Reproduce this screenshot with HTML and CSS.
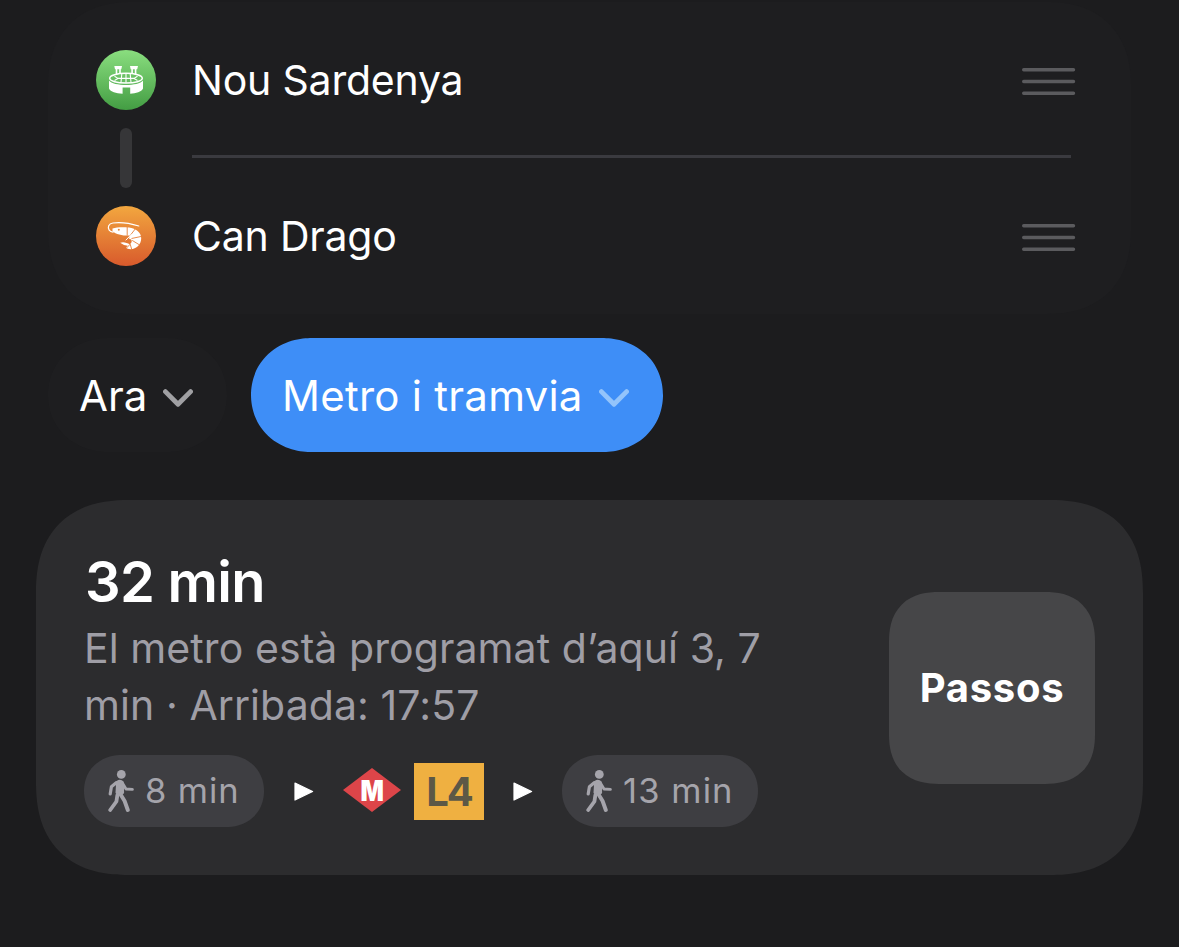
FILE: index.html
```html
<!DOCTYPE html>
<html lang="ca">
<head>
    <meta charset="UTF-8">
    <meta name="viewport" content="width=device-width, initial-scale=1.0">
    <title>Ruta: Nou Sardenya - Can Drago</title>
    <link rel="stylesheet" href="styles.css">
</head>
<body>

    <!-- Shared icons -->
    <svg class="sprite" width="0" height="0">
        <symbol id="walk" viewBox="0 0 26 42">
            <circle cx="13.3" cy="4.4" r="4.4" fill="currentColor"/>
            <path d="M9.5 11.8 Q12.5 10.3 14.6 12.5 L14.8 22.5 Q12 25.5 8.8 22.5 Z" fill="currentColor" stroke="currentColor" stroke-width="2.6" stroke-linejoin="round"/>
            <g fill="none" stroke="currentColor" stroke-linecap="round" stroke-linejoin="round">
                <path d="M8.5 12.6 L3.4 16.8 L2.2 24" stroke-width="3.2"/>
                <path d="M15 14 L18 19 L24.4 19.4" stroke-width="2.9"/>
                <path d="M9.4 25 L8.4 31.5 L2.2 40" stroke-width="3.8"/>
                <path d="M12 23.5 L16.6 31 L19.8 40" stroke-width="3.9"/>
            </g>
        </symbol>
        <symbol id="chevron" viewBox="0 0 30 18">
            <path d="M2.4 2.6 L15 15.2 L27.6 2.6" fill="none" stroke="currentColor" stroke-width="4.8" stroke-linecap="round" stroke-linejoin="round"/>
        </symbol>
        <symbol id="handle" viewBox="0 0 54 28">
            <path d="M1.7 1.7 H51.5 M1.7 13.5 H51.5 M1.7 25.3 H51.5" fill="none" stroke="currentColor" stroke-width="3.4" stroke-linecap="round"/>
        </symbol>
        <symbol id="arrow" viewBox="0 0 20 19">
            <path d="M1 1 L18.6 9.5 L1 18 Z" fill="currentColor" stroke="currentColor" stroke-width="1.2" stroke-linejoin="round"/>
        </symbol>
    </svg>

    <section class="stops">
        <div class="rail">
            <span class="stop-icon stadium">
                <svg width="60" height="60" viewBox="0 0 60 60">
                    <g fill="#fff">
                        <path d="M18.3 16 H26 L25.3 19.2 H19 Z"/>
                        <path d="M34 16 H42 L41.2 19.2 H34.7 Z"/>
                        <path d="M19.7 19 H21.3 V24.5 H19.7 Z M23.2 19 H24.8 V23.5 H23.2 Z M35.3 19 H36.9 V23.5 H35.3 Z M38.8 19 H40.4 V24.5 H38.8 Z"/>
                        <path d="M13 30.6 C17 36.6 43 36.6 47 30.6 V38.5 C45.5 42 40 43.2 34.2 43.7 V37.5 H26.6 V43.7 C20 43.3 14.5 42 13 38.5 Z"/>
                    </g>
                    <g fill="none" stroke="#fff">
                        <ellipse cx="30" cy="28.2" rx="16.3" ry="4.9" stroke-width="1.5"/>
                        <path d="M18.5 30.5 L22 28.4 L18.5 26.2 M41.5 30.5 L38 28.4 L41.5 26.2 M25.8 24 L25 32.2 M30 24 V32.8 M34.2 24 L35 32.2 M22 28.4 H38" stroke-width="1.1"/>
                    </g>
                </svg>
            </span>
            <span class="connector"></span>
            <span class="stop-icon seafood">
                <svg width="60" height="60" viewBox="0 0 60 60">
                    <path d="M42.8 20 C33 17 24 16 17 17 C12.5 17.8 11.3 21 13.2 24.2 Q14.5 26 17 26.2" fill="none" stroke="#fff" stroke-width="1.2" stroke-linecap="round"/>
                    <path d="M16.5 22.4 C21 21 28 21 33 21.6 C40 22.5 45 26.5 45.2 32 C45.3 38.5 40.5 43 34.5 43.2 C32.5 43.2 30.8 42.6 30 41.6 L31.8 39.8 Q28 39.8 24.2 36.8 C27 35.4 31 36.6 33.8 38.4 C36.4 36.4 36.6 33 33 32.8 L33.5 29.6 C27 29.8 20 28.4 16.5 25.2 Z" fill="#fff"/>
                    <circle cx="22.8" cy="23.8" r="1" fill="#e98a3a"/>
                    <path d="M31.2 21 V29.5 M39.2 23 L31 33.6 M45.5 30.4 L35.5 32.5 M43.7 39 L36.2 34.4 M35.8 43.7 L34.2 38.2 L30.5 42" fill="none" stroke="#e67e38" stroke-width="0.9"/>
                    <path d="M35.5 28.3 L30 34" stroke="#fff" stroke-width="1" stroke-linecap="round"/>
                </svg>
            </span>
        </div>
        <div class="stop-list">
            <div class="stop">
                <span class="stop-name">Nou Sardenya</span>
                <svg class="handle" width="54" height="28"><use href="#handle"/></svg>
            </div>
            <div class="stop">
                <span class="stop-name">Can Drago</span>
                <svg class="handle" width="54" height="28"><use href="#handle"/></svg>
            </div>
        </div>
    </section>

    <div class="filters">
        <button class="filter">Ara <svg class="chevron" width="30" height="18"><use href="#chevron"/></svg></button>
        <button class="filter active">Metro i tramvia <svg class="chevron" width="30" height="18"><use href="#chevron"/></svg></button>
    </div>

    <section class="route">
        <div class="route-info">
            <h1>32 min</h1>
            <p>El metro està programat d’aquí 3, 7<br>min · Arribada: 17:57</p>
            <div class="legs">
                <span class="walk"><svg width="26" height="42"><use href="#walk"/></svg>8 min</span>
                <svg class="arrow" width="20" height="19"><use href="#arrow"/></svg>
                <svg class="metro" width="58" height="44" viewBox="0 0 58 44">
                    <path d="M0 22 L29 0 L58 22 L29 44 Z" fill="#dd4549"/>
                    <text x="17.4" y="32.6" textLength="23.4" lengthAdjust="spacingAndGlyphs" class="metro-letter">M</text>
                </svg>
                <span class="line">L4</span>
                <svg class="arrow" width="20" height="19"><use href="#arrow"/></svg>
                <span class="walk long"><svg width="26" height="42"><use href="#walk"/></svg>13 min</span>
            </div>
        </div>
        <button class="steps">Passos</button>
    </section>

</body>
</html>
```
FILE: styles.css
```css
* {
    box-sizing: border-box;
}
body {
    background-color: #1c1c1e;
    color: #ffffff;
    font-family: Inter, "Liberation Sans", sans-serif;
    margin: 0;
    padding: 2px 36px 0;
    height: 947px;
    overflow: hidden;
}
button {
    border: none;
    color: inherit;
    font-family: inherit;
    cursor: pointer;
}
svg {
    display: block;
    flex: none;
}
.sprite {
    position: absolute;
}

/* Stops */
.stops {
    display: flex;
    gap: 36px;
    height: 312px;
    margin: 0 12px;
    padding: 0 55px 0 48px;
    background-color: #1e1e20;
    border-radius: 84px;
    corner-shape: superellipse(1.2);
}
.rail {
    display: flex;
    flex-direction: column;
    align-items: center;
    gap: 18px;
    padding-top: 48px;
}
.stop-icon {
    width: 60px;
    height: 60px;
    border-radius: 50%;
}
.stadium {
    background: linear-gradient(#8ade7f, #439d43);
}
.seafood {
    background: linear-gradient(#f2a73f, #d85a2c);
}
.connector {
    width: 12px;
    height: 60px;
    border-radius: 6px;
    background-color: #363638;
}
.stop-list {
    flex: 1;
}
.stop {
    display: flex;
    justify-content: space-between;
    align-items: center;
    height: 156px;
    font-size: 41px;
    letter-spacing: -0.2px;
}
.stop:first-child {
    background: linear-gradient(#3a3a3f, #3a3a3f) left bottom / 879px 3px no-repeat;
}
.handle {
    color: #5b5b5e;
    margin-top: 3px;
}

/* Filters */
.filters {
    display: flex;
    gap: 24px;
    margin: 24px 12px 0;
}
.filter {
    display: flex;
    align-items: center;
    justify-content: space-between;
    width: 179px;
    height: 114px;
    padding: 0 34px 0 31px;
    border-radius: 61px / 57px;
    corner-shape: superellipse(1.06);
    background-color: #1e1e20;
    font-size: 42px;
}
.filter.active {
    width: 412px;
    background-color: #3e8ef7;
    letter-spacing: 0.25px;
}
.chevron {
    color: #a0a0a3;
    margin-top: 5px;
}
.active .chevron {
    color: #93c4fb;
}

/* Route card */
.route {
    display: flex;
    justify-content: space-between;
    align-items: center;
    height: 375px;
    margin-top: 48px;
    padding: 0 48px;
    border-radius: 93px;
    corner-shape: superellipse(1.25);
    background-color: #2c2c2e;
}
.route h1 {
    margin: 0;
    padding-left: 1px;
    font-size: 56px;
    font-weight: 600;
    letter-spacing: -0.7px;
    line-height: 68px;
}
.route p {
    margin: 4px 0 21px;
    color: #9f9ea6;
    font-size: 41px;
    letter-spacing: 0.08px;
    line-height: 57px;
    white-space: nowrap;
}
.route-info {
    margin-top: -1px;
}
.legs {
    display: flex;
    align-items: center;
}
.walk {
    display: flex;
    align-items: center;
    gap: 11px;
    width: 180px;
    height: 72px;
    padding-left: 24px;
    border-radius: 38px / 36px;
    corner-shape: superellipse(1.08);
    background-color: #3e3e42;
    color: #a5a4ab;
    font-size: 34.5px;
    letter-spacing: 0.9px;
    line-height: 44px;
    white-space: nowrap;
}
.walk.long {
    width: 196px;
    letter-spacing: 1.1px;
}
.arrow {
    margin: 1px 29px 0;
}
.walk + .arrow {
    margin-left: 30px;
}
.metro {
    margin-top: -2px;
}
.metro-letter {
    fill: #ffffff;
    font-size: 29px;
    font-weight: 900;
}
.line {
    width: 70px;
    height: 57px;
    margin: 2px 0 0 13px;
    background-color: #efb041;
    color: #5c5846;
    font-size: 40px;
    font-weight: 700;
    letter-spacing: -2px;
    line-height: 58px;
    text-align: center;
}
.steps {
    width: 206px;
    height: 192px;
    border-radius: 50px;
    corner-shape: superellipse(1.25);
    background-color: #464648;
    font-size: 40px;
    font-weight: 700;
    letter-spacing: 0.7px;
}
```
